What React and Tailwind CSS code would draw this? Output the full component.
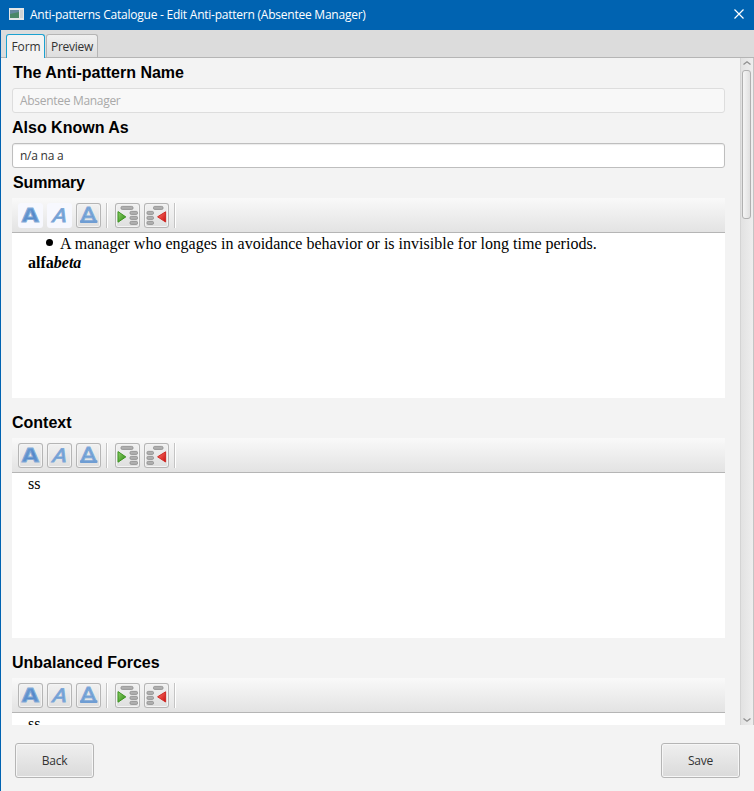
import React from "react";

const UI = "font-['Open_Sans','Noto_Sans',sans-serif]";

function Defs() {
  return (
    <svg className="absolute h-0 w-0" aria-hidden="true">
      <defs>
        <linearGradient id="blueInk" x1="0" y1="0" x2="1" y2="1">
          <stop offset="0" stopColor="#86acd8" />
          <stop offset="0.55" stopColor="#5288c9" />
          <stop offset="1" stopColor="#6f9ed4" />
        </linearGradient>
        <linearGradient id="greenArrow" x1="0" y1="0" x2="1" y2="1">
          <stop offset="0" stopColor="#8fd06a" />
          <stop offset="1" stopColor="#2c8a10" />
        </linearGradient>
        <linearGradient id="redArrow" x1="0" y1="0" x2="1" y2="1">
          <stop offset="0" stopColor="#ff7a6e" />
          <stop offset="1" stopColor="#c80d0d" />
        </linearGradient>
      </defs>
    </svg>
  );
}

function LetterIcon({ kind }) {
  return (
    <svg width="25" height="25" viewBox="0 0 25 25" className="block">
      {kind === "bold" && (
        <text transform="translate(3.6 19.4) scale(1.16 1)" fontFamily="DejaVu Sans" fontWeight="700" fontSize="19.5" fill="url(#blueInk)" stroke="#86add9" strokeWidth="0.8">A</text>
      )}
      {kind === "italic" && (
        <text transform="translate(4.2 19.2) skewX(-17) scale(1.1 1)" fontFamily="DejaVu Sans" fontSize="18.5" fill="#6596d0" stroke="#7fa9d9" strokeWidth="1.1">A</text>
      )}
      {kind === "underline" && (
        <>
          <text transform="translate(4.7 18.2) scale(1.12 1)" fontFamily="DejaVu Sans" fontSize="20" fill="#6596d0" stroke="#7fa9d9" strokeWidth="1.1">A</text>
          <rect x="4" y="17.3" width="17.5" height="2.8" rx="0.8" fill="#6f9dd3" />
        </>
      )}
    </svg>
  );
}

function IndentIcon({ out }) {
  const bars = out ? [[9, 3], [2.5, 8], [2.5, 13], [2.5, 18]] : [[5.5, 3], [14.5, 8], [14.5, 13], [14.5, 18]];
  return (
    <svg width="25" height="25" viewBox="0 0 25 25" className="block">
      {bars.map(([x, y], i) => (
        <rect key={i} x={x + 0.5} y={y + 0.4} width={i === 0 ? (out ? 9.5 : 12) : out ? 6.5 : 7.5} height="3" rx="1.2" fill="#b0b0b0" stroke="#929292" strokeWidth="0.9" />
      ))}
      {out ? (
        <path d="M13.6 13.8 L21.6 8.8 V19 Z" fill="url(#redArrow)" stroke="#cf2a26" strokeWidth="1" strokeLinejoin="round" />
      ) : (
        <path d="M3 8.6 L10.8 13.9 L3 19.2 Z" fill="url(#greenArrow)" stroke="#3c9420" strokeWidth="1" strokeLinejoin="round" />
      )}
    </svg>
  );
}

function ToolButton({ plain, children }) {
  return (
    <button
      className={
        plain
          ? "h-[25px] w-[25px] rounded-[3px] bg-[#f7f8fe]"
          : "h-[25px] w-[25px] rounded-[3px] bg-linear-to-b from-[#f2f2f2] to-[#dedede] shadow-[inset_0_0_0_1px_#b5b5b5,inset_0_0_0_2px_#f4f4f4]"
      }
    >
      {children}
    </button>
  );
}

function Separator() {
  return <div className="h-[25px] w-[2px] border-l border-[#c4c4c4] bg-white" />;
}

function Toolbar({ plain }) {
  return (
    <div className="flex h-[35px] shrink-0 items-center border-b border-[#b5b5b5] bg-linear-to-b from-[#f9f9f9] to-[#e3e3e3] pl-[6px]">
      <div className="flex gap-1">
        <ToolButton plain={plain}><LetterIcon kind="bold" /></ToolButton>
        <ToolButton plain={plain}><LetterIcon kind="italic" /></ToolButton>
        <ToolButton><LetterIcon kind="underline" /></ToolButton>
      </div>
      <div className="ml-[5px] mr-[7px]"><Separator /></div>
      <div className="flex gap-1">
        <ToolButton><IndentIcon /></ToolButton>
        <ToolButton><IndentIcon out /></ToolButton>
      </div>
      <div className="ml-[5px]"><Separator /></div>
    </div>
  );
}

function Label({ className = "", children }) {
  return (
    <h2 className={`flex h-[30px] shrink-0 items-center whitespace-nowrap pb-px font-['Liberation_Sans',Arial,sans-serif] text-[16px] font-bold text-black ${className}`}>
      {children}
    </h2>
  );
}

function Editor({ children }) {
  return (
    <div className="h-[165px] shrink-0 bg-white pl-4 pt-px font-['Liberation_Serif',serif] text-[16px] leading-[19px] text-black">
      {children}
    </div>
  );
}

export default function App() {
  return (
    <div className={`flex h-[791px] w-[754px] flex-col overflow-hidden border-l border-[#0063b1] bg-[#f3f3f3] text-[12px] text-[#333] ${UI}`}>
      <Defs />
      <header className="flex h-[30px] shrink-0 items-center bg-[#0063b1] pl-2 pr-[10px] text-white">
        <svg width="15" height="12" viewBox="0 0 15 12" className="mb-[2px]">
          <rect width="15" height="12" fill="#e4e7e8" />
          <rect x="1" y="2" width="9" height="8" fill="#668aa0" />
          <path d="M1 6 L10 4 V10 H1 Z" fill="#4b8868" />
          <rect x="11" y="2" width="3" height="8" fill="#cfd3d4" />
        </svg>
        <span className="ml-[6px] whitespace-nowrap tracking-[-0.235px]">Anti-patterns Catalogue - Edit Anti-pattern (Absentee Manager)</span>
        <svg width="10" height="10" viewBox="0 0 10 10" className="ml-auto mb-[2px]">
          <path d="M0.5 0.5 L9.5 9.5 M9.5 0.5 L0.5 9.5" stroke="#fff" strokeWidth="1.2" />
        </svg>
      </header>

      <nav className="flex h-7 shrink-0 items-end gap-px border-b border-[#b5b5b5] bg-[#dcdcdc] pl-[5px]">
        <div className="-mb-px flex h-6 w-[39px] items-center justify-center rounded-t-[3px] border border-b-0 border-[#1ba1d0] bg-[#f3f3f3] pl-px pt-px tracking-[-0.1px]">Form</div>
        <div className="flex h-[23px] w-[52px] items-center justify-center rounded-t-[3px] border border-b-0 border-[#b5b5b5] bg-linear-to-b from-[#f0f0f0] to-[#dedede] pt-[2px] tracking-[-0.25px]">Preview</div>
      </nav>

      <div className="flex h-[667px] shrink-0">
        <div className="flex w-[724px] flex-col overflow-hidden pl-[11px]">
          <Label className="pl-px">The Anti-pattern Name</Label>
          <div className="flex h-[25px] shrink-0 items-center rounded-[3px] border border-[#dddddd] bg-[#f8f8f8] pl-[7px] tracking-[-0.3px] text-[#a9a9a9]">Absentee Manager</div>
          <Label>Also Known As</Label>
          <div className="flex h-[25px] shrink-0 items-center rounded-[3px] border border-[#bebebe] bg-white pl-[7px] tracking-[-0.25px] shadow-[inset_0_1px_1px_#ececec]">n/a na a</div>
          <Label className="pl-px tracking-[-0.15px]">Summary</Label>
          <Toolbar plain />
          <Editor>
            <ul>
              <li className="flex items-center">
                <span className="ml-[18px] mr-[7px] mb-[3px] h-[7px] w-[7px] rounded-full bg-black" />
                <span className="whitespace-nowrap tracking-[0.01px]">A manager who engages in avoidance behavior or is invisible for long time periods.</span>
              </li>
            </ul>
            <p><b>alfa<i>beta</i></b></p>
          </Editor>
          <Label className="mt-[10px]">Context</Label>
          <Toolbar />
          <Editor>ss</Editor>
          <Label className="mt-[10px]">Unbalanced Forces</Label>
          <Toolbar />
          <Editor>ss</Editor>
        </div>

        <div className="ml-auto flex w-[14px] flex-col items-center border-x border-l-[#d4d4d4] border-r-[#c4c4c4] bg-linear-to-r from-[#e2e2e2] to-[#eeeeee] pr-px">
          <svg width="10" height="12" viewBox="0 0 10 12" className="shrink-0">
            <path d="M1.5 6.5 L5 3.8 L8.5 6.5" fill="none" stroke="#909090" strokeWidth="1.3" />
          </svg>
          <div className="h-[149px] w-[9px] shrink-0 rounded-[3px] border border-[#b0b0b0] bg-linear-to-r from-[#f5f5f5] to-[#e0e0e0]" />
          <svg width="10" height="10" viewBox="0 0 10 10" className="mt-auto shrink-0">
            <path d="M1.5 3.5 L5 6.2 L8.5 3.5" fill="none" stroke="#909090" strokeWidth="1.3" />
          </svg>
        </div>
      </div>

      <footer className="flex flex-1 items-start justify-between pl-[14px] pr-[14px] pt-[18px]">
        <button className="h-[35px] w-[79px] rounded-[3px] border border-[#b5b5b5] bg-linear-to-b from-[#efefef] to-[#dadada] tracking-[-0.2px] shadow-[inset_0_0_0_1px_#f6f6f6]">Back</button>
        <button className="h-[35px] w-[79px] rounded-[3px] border border-[#b5b5b5] bg-linear-to-b from-[#efefef] to-[#dadada] tracking-[-0.2px] shadow-[inset_0_0_0_1px_#f6f6f6]">Save</button>
      </footer>
    </div>
  );
}
